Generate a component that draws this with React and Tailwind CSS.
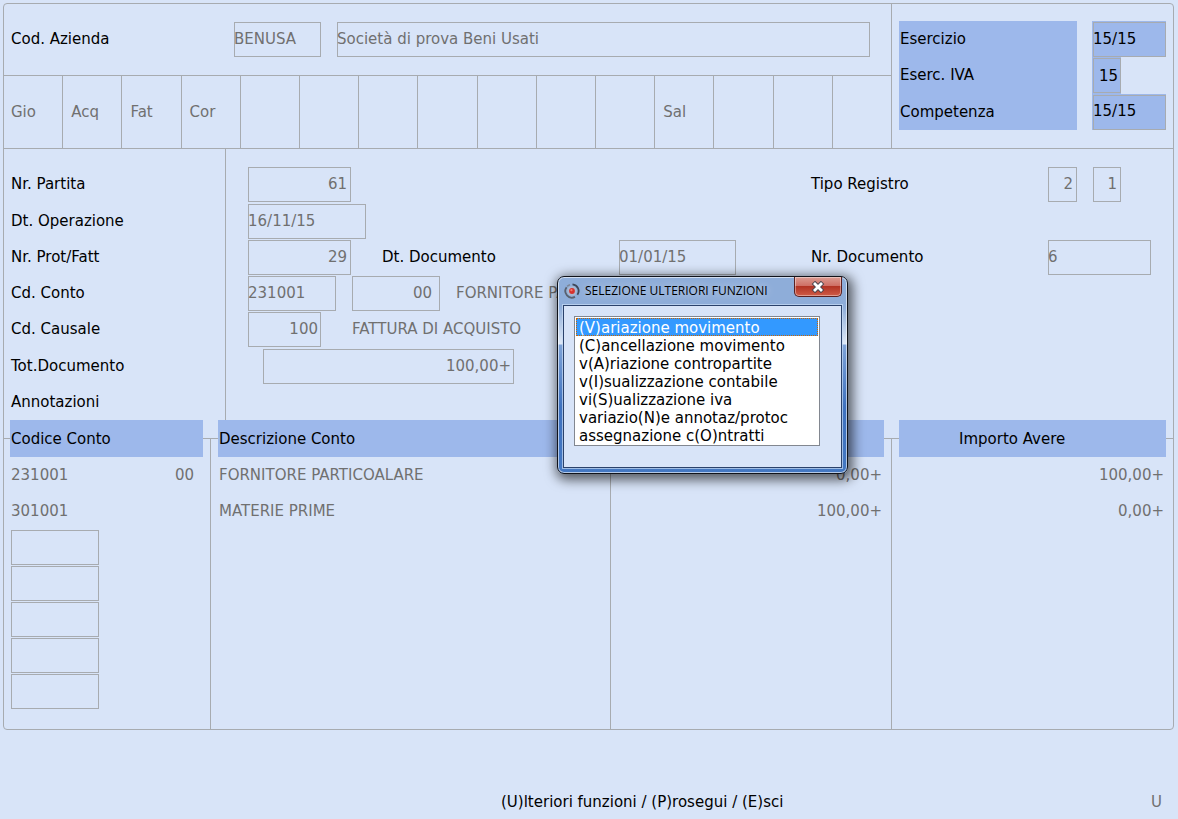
import React, { useState } from 'react'
import clsx from 'clsx'

const TABS = ['Gio', 'Acq', 'Fat', 'Cor', '', '', '', '', '', '', '', 'Sal', '', '', '']

const FUNCTIONS = [
  '(V)ariazione movimento',
  '(C)ancellazione movimento',
  'v(A)riazione contropartite',
  'v(I)sualizzazione contabile',
  'vi(S)ualizzazione iva',
  'variazio(N)e annotaz/protoc',
  'assegnazione c(O)ntratti'
]

const ROWS = [
  { code: '231001', sub: '00', description: 'FORNITORE PARTICOALARE', debit: '0,00+', credit: '100,00+' },
  { code: '301001', sub: '', description: 'MATERIE PRIME', debit: '100,00+', credit: '0,00+' }
]

const EMPTY_ROWS = [3, 4, 5, 6, 7]

const LABELS = [
  ['partita', 'Nr. Partita'],
  ['operazione', 'Dt. Operazione'],
  ['protocollo', 'Nr. Prot/Fatt'],
  ['conto', 'Cd. Conto'],
  ['causale', 'Cd. Causale'],
  ['totale', 'Tot.Documento']
]

const Field = ({ className, right, ...props }) => (
  <input
    readOnly
    className={clsx(
      'block h-[35px] min-w-0 bg-transparent outline-none ring-1 ring-inset ring-[#a7abb0]',
      right && 'text-right',
      className
    )}
    {...props}
  />
)

const HeaderCell = ({ children, first, last, indent }) => (
  <th scope="col" className="relative p-0 text-left font-normal">
    <div className="flex items-center">
      <span className={clsx('h-px shrink-0 bg-[#a7abb0]', first ? 'w-[6px]' : 'w-[7px]')} />
      <span className={clsx('flex h-[37px] flex-1 items-center bg-[#9db8eb]', indent ? 'pl-[60px]' : 'pl-px')}>
        {children}
      </span>
      <span className={clsx('h-px shrink-0 bg-[#a7abb0]', last ? 'w-[7px]' : 'w-2')} />
    </div>
    {!last && <span className="absolute right-0 top-1/2 bottom-0 w-px bg-[#a7abb0]" />}
  </th>
)

const CompanyBar = () => (
  <div className="flex h-[72px] items-center border-b border-[#a7abb0] pl-[7px] pr-[21px]">
    <label htmlFor="azienda" className="w-[223px] shrink-0 pb-0.5">Cod. Azienda</label>
    <Field id="azienda" defaultValue="BENUSA" className="w-[87px] pb-0.5 text-[#707070]" />
    <Field
      aria-label="Ragione sociale"
      defaultValue="Società di prova Beni Usati"
      className="ml-4 flex-1 pb-0.5 text-[#707070]"
    />
  </div>
)

const TabStrip = () => (
  <div className="-mr-px grid h-[72px] grid-cols-15">
    {TABS.map((tab, i) => (
      <div
        key={i}
        className={clsx(
          'flex items-center text-[#707070]',
          i === 0 ? 'pl-[7px]' : 'pl-2',
          i < TABS.length - 1 && 'border-r border-[#a7abb0]'
        )}
      >
        {tab}
      </div>
    ))}
  </div>
)

const PeriodPanel = () => (
  <div className="flex w-[281px] shrink-0 gap-[15px] pt-[17px] pl-[7px]">
    <div className="grid h-[109px] w-[178px] grid-rows-3 items-center bg-[#9db8eb] pl-px">
      <label htmlFor="esercizio">Esercizio</label>
      <label htmlFor="eserc-iva">Eserc. IVA</label>
      <label htmlFor="competenza">Competenza</label>
    </div>
    <div className="grid h-[109px] grid-rows-3 justify-items-start">
      <div className="bg-[#9db8eb] pt-px pl-px">
        <Field id="esercizio" defaultValue="15/15" className="w-[73px] pb-0.5" />
      </div>
      <div className="bg-[#9db8eb] pt-px pl-px">
        <Field id="eserc-iva" defaultValue="15" right className="w-7 pr-[3px]" />
      </div>
      <div className="bg-[#9db8eb] pt-px pl-px">
        <Field id="competenza" defaultValue="15/15" className="w-[73px] pb-0.5" />
      </div>
    </div>
  </div>
)

const MovementForm = () => (
  <div className="flex border-t border-[#a7abb0] leading-[35px]">
    <div className="w-[222px] shrink-0 border-r border-[#a7abb0] pt-[17px] pl-[7px]">
      <div className="grid h-[254px] grid-rows-7 items-end">
        {LABELS.map(([id, label]) => (
          <label key={id} htmlFor={id}>{label}</label>
        ))}
        <span>Annotazioni</span>
      </div>
    </div>
    <div className="min-w-0 flex-1 pt-[17px] pl-[22px]">
      <div className="grid h-[254px] grid-rows-7 text-[#707070]">
        <div className="flex items-end">
          <Field id="partita" defaultValue="61" right className="w-[103px] pr-1" />
          <div className="ml-auto flex w-[362px] items-end">
            <label htmlFor="registro" className="w-[237px] text-black">Tipo Registro</label>
            <Field id="registro" defaultValue="2" right className="w-[29px] pr-1" />
            <Field aria-label="Numero registro" defaultValue="1" right className="ml-4 w-7 pr-1" />
          </div>
        </div>
        <div className="flex items-end">
          <Field id="operazione" defaultValue="16/11/15" className="w-[118px]" />
        </div>
        <div className="flex items-end">
          <Field id="protocollo" defaultValue="29" right className="w-[103px] pr-1" />
          <label htmlFor="dt-documento" className="ml-[31px] w-[237px] text-black">Dt. Documento</label>
          <Field id="dt-documento" defaultValue="01/01/15" className="w-[117px]" />
          <div className="ml-auto flex w-[362px] items-end">
            <label htmlFor="nr-documento" className="w-[237px] text-black">Nr. Documento</label>
            <Field id="nr-documento" defaultValue="6" className="w-[103px]" />
          </div>
        </div>
        <div className="flex items-end gap-4">
          <Field id="conto" defaultValue="231001" className="w-[88px]" />
          <Field aria-label="Sottoconto" defaultValue="00" right className="w-[88px] pr-2" />
          <span>FORNITORE PARTICOALARE</span>
        </div>
        <div className="flex items-end">
          <Field id="causale" defaultValue="100" right className="w-[73px] pr-[3px]" />
          <span className="ml-[31px]">FATTURA DI ACQUISTO</span>
        </div>
        <div className="flex items-end pl-[15px]">
          <Field id="totale" defaultValue="100,00+" right className="w-[251px] pr-[3px]" />
        </div>
      </div>
    </div>
  </div>
)

const EntriesTable = () => (
  <table className="w-full table-fixed border-separate border-spacing-0">
    <colgroup>
      <col className="w-[207px]" />
      <col />
      <col className="w-[281px]" />
      <col className="w-[281px]" />
    </colgroup>
    <thead>
      <tr>
        <HeaderCell first>Codice Conto</HeaderCell>
        <HeaderCell>Descrizione Conto</HeaderCell>
        <HeaderCell indent>Importo Dare</HeaderCell>
        <HeaderCell indent last>Importo Avere</HeaderCell>
      </tr>
    </thead>
    <tbody className="text-[#707070]">
      {ROWS.map((row) => (
        <tr key={row.code} className="h-9">
          <td className="border-r border-[#a7abb0] p-0 pl-[7px] pr-4">
            <div className="flex justify-between">
              <span>{row.code}</span>
              <span>{row.sub}</span>
            </div>
          </td>
          <td className="border-r border-[#a7abb0] p-0 pl-2">{row.description}</td>
          <td className="border-r border-[#a7abb0] p-0 pr-[9px] text-right">{row.debit}</td>
          <td className="p-0 pr-[9px] text-right">{row.credit}</td>
        </tr>
      ))}
      {EMPTY_ROWS.map((n) => (
        <tr key={n} className="h-9">
          <td className="border-r border-[#a7abb0] p-0 pl-[7px]">
            <Field aria-label={`Codice conto riga ${n}`} className="w-[88px]" />
          </td>
          <td className="border-r border-[#a7abb0]" />
          <td className="border-r border-[#a7abb0]" />
          <td />
        </tr>
      ))}
      <tr className="h-5">
        <td className="border-r border-[#a7abb0]" />
        <td className="border-r border-[#a7abb0]" />
        <td className="border-r border-[#a7abb0]" />
        <td />
      </tr>
    </tbody>
  </table>
)

const AppIcon = () => (
  <svg width="16" height="16" viewBox="0 0 16 16" aria-hidden="true">
    <circle cx="8" cy="8" r="4.8" fill="#a9b9d2" />
    <path d="M8.5 1.4 A6.6 6.6 0 0 1 13.4 11.8" fill="none" stroke="#3f4757" strokeWidth="1.8" />
    <path d="M11 13.9 A6.6 6.6 0 0 1 2.6 4.2" fill="none" stroke="#59616f" strokeWidth="1.8" />
    <path d="M3.2 3.4 A6.6 6.6 0 0 1 6 1.8" fill="none" stroke="#7b8494" strokeWidth="1.6" />
    <circle cx="8" cy="8" r="2.9" fill="#d6322e" />
    <circle cx="7.4" cy="7.2" r="1.1" fill="#f4796c" />
  </svg>
)

const FunctionsDialog = () => {
  const [selected, setSelected] = useState(FUNCTIONS[0])

  return (
    <div
      role="dialog"
      aria-labelledby="dialog-title"
      className="absolute left-[557px] top-[276px] w-[291px] rounded-[7px] border border-[#10131a] bg-[linear-gradient(180deg,#8eadd9_0px,#8eadd9_30px,#dfe9f7_67px,#7ea3d8_68px,#3f72bf_130px,#4478c2_100%)] px-[5px] pb-[5px] shadow-[inset_0_0_0_1px_rgba(255,255,255,0.6),2px_3px_12px_3px_rgba(0,0,0,0.6)]"
    >
      <div className="flex h-7 items-start pl-px">
        <div className="flex h-7 flex-1 items-center gap-[5px]">
          <AppIcon />
          <h2
            id="dialog-title"
            className="whitespace-nowrap font-['Open_Sans',sans-serif] text-xs [text-shadow:0_0_8px_rgba(255,255,255,0.7)]"
          >
            SELEZIONE ULTERIORI FUNZIONI
          </h2>
        </div>
        <button
          aria-label="Chiudi"
          className="flex h-5 w-12 items-center justify-center rounded-b-[5px] border border-t-0 border-[#5b2020] bg-[linear-gradient(180deg,#dc9c92_0%,#cf7066_45%,#b23324_50%,#cf5c48_100%)] shadow-[inset_0_0_0_1px_rgba(255,255,255,0.4)]"
        >
          <svg width="14" height="12" viewBox="0 0 14 12" aria-hidden="true">
            <path d="M2.4 1.4 L11.6 10.6 M11.6 1.4 L2.4 10.6" stroke="#4b4650" strokeWidth="4.8" />
            <path d="M3 2 L11 10 M11 2 L3 10" stroke="#fff" strokeWidth="2.8" />
          </svg>
        </button>
      </div>
      <div className="border border-[#2b426b] bg-[#d8e4f8] px-[10px] pt-[10px] pb-[21px] shadow-[0_0_0_1px_rgba(200,220,245,0.7)]">
        <select
          size={7}
          aria-label="Ulteriori funzioni"
          value={selected}
          onChange={(e) => setSelected(e.target.value)}
          className="block h-[130px] w-[246px] overflow-hidden border border-[#828790] bg-white p-px text-black outline-none"
        >
          {FUNCTIONS.map((name) => (
            <option
              key={name}
              className="h-[18px] border border-dotted border-transparent p-0 pl-[2px] leading-[18px] checked:border-[#cc6600] checked:bg-[linear-gradient(#3399ff,#3399ff)] checked:[-webkit-text-fill-color:white]"
            >
              {name}
            </option>
          ))}
        </select>
      </div>
    </div>
  )
}

export default function App() {
  return (
    <div className="relative min-h-screen bg-[#d8e4f8] pt-[3px] pr-1 pl-[3px] font-['DejaVu_Sans',sans-serif] text-[15px] leading-[18px] text-black">
      <main className="rounded border border-[#a7abb0]">
        <div className="flex">
          <div className="min-w-0 flex-1 border-r border-[#a7abb0]">
            <CompanyBar />
            <TabStrip />
          </div>
          <PeriodPanel />
        </div>
        <MovementForm />
        <EntriesTable />
      </main>

      <footer className="flex items-center justify-between pt-[63px] pr-3 pl-[498px]">
        <div className="whitespace-nowrap">
          <button>(U)lteriori funzioni</button> / <button>(P)rosegui</button> / <button>(E)sci</button>
        </div>
        <input aria-label="Scelta" readOnly defaultValue="U" className="w-6 bg-transparent text-right text-[#707070] outline-none" />
      </footer>

      <FunctionsDialog />
    </div>
  )
}
